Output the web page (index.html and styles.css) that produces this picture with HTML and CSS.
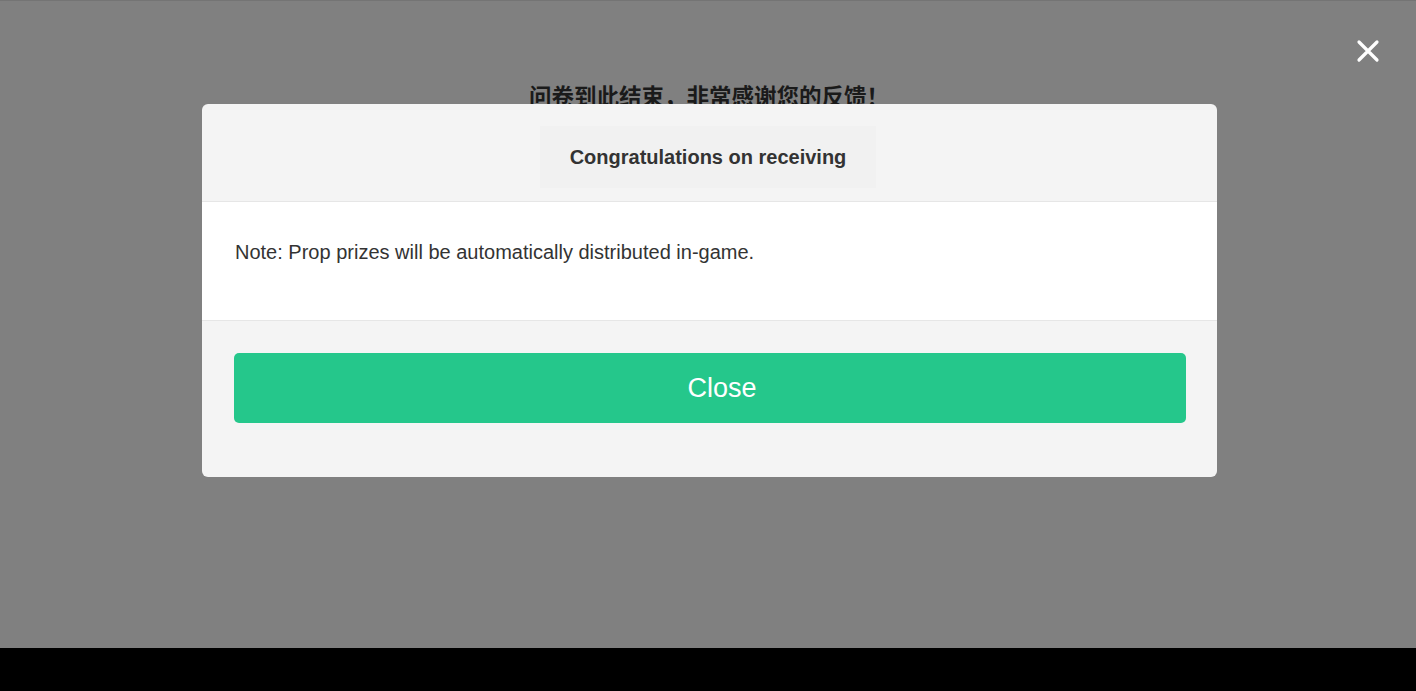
FILE: index.html
```html
<!DOCTYPE html>
<html lang="zh">
<head>
<meta charset="utf-8">
<title>问卷</title>
<link rel="stylesheet" href="styles.css">
</head>
<body>
<div class="screen">
  <div class="page">
    <h1 class="finish">问卷到此结束，非常感谢您的反馈！</h1>
  </div>
  <button class="x-close" aria-label="close">
    <svg width="24" height="24" viewBox="0 0 24 24"><path d="M3 3 L21 21 M21 3 L3 21" stroke="#fff" stroke-width="3.2" stroke-linecap="round"/></svg>
  </button>
  <div class="dialog">
    <div class="dlg-head">
      <div class="dlg-title">Congratulations on receiving</div>
    </div>
    <div class="dlg-body">Note: Prop prizes will be automatically distributed in-game.</div>
    <div class="dlg-foot">
      <button class="btn">Close</button>
    </div>
  </div>
</div>
<div class="bottom-bar"></div>
</body>
</html>
```
FILE: styles.css
```css
html, body {
  margin: 0;
  padding: 0;
  background: #000;
  font-family: "Liberation Sans", Arial, sans-serif;
}
.screen {
  position: relative;
  height: 648px;
  background: #808080;
  border-top: 1px solid #747474;
  box-sizing: border-box;
  overflow: hidden;
}
.page {
  display: flex;
  justify-content: center;
  padding-top: 78px;
  padding-left: 2px;
}
.finish {
  margin: 0;
  font-family: "Noto Sans CJK SC", "Liberation Sans", sans-serif;
  font-weight: 700;
  font-size: 22.5px;
  line-height: 32px;
  color: #1a1a1a;
}
.x-close {
  position: absolute;
  top: 38px;
  left: 1356px;
  width: 24px;
  height: 24px;
  padding: 0;
  border: 0;
  background: none;
}
.x-close svg { display: block; }
.dialog {
  position: absolute;
  top: 103px;
  left: 202px;
  width: 1015px;
  border-radius: 6px;
  overflow: hidden;
  background: #f4f4f4;
}
.dlg-head {
  display: flex;
  justify-content: center;
  padding: 22px 0 13px;
  border-bottom: 1px solid #e6e6e6;
}
.dlg-title {
  width: 336px;
  height: 62px;
  margin-right: 3px;
  display: flex;
  align-items: center;
  justify-content: center;
  background: #f1f1f1;
  font-weight: 700;
  font-size: 20px;
  color: #333;
}
.dlg-body {
  background: #fff;
  padding: 38px 33px 0;
  height: 80px;
  font-size: 20px;
  line-height: 24px;
  color: #333;
  border-bottom: 1px solid #e6e6e6;
}
.dlg-foot {
  padding: 32px 31px 54px 32px;
}
.btn {
  display: block;
  width: 100%;
  height: 70px;
  padding: 0 0 0 24px;
  border: 0;
  border-radius: 5px;
  background: #25c78b;
  color: #fff;
  font-family: "Liberation Sans", Arial, sans-serif;
  font-size: 27px;
}
.bottom-bar {
  height: 43px;
  background: #000;
}
```
